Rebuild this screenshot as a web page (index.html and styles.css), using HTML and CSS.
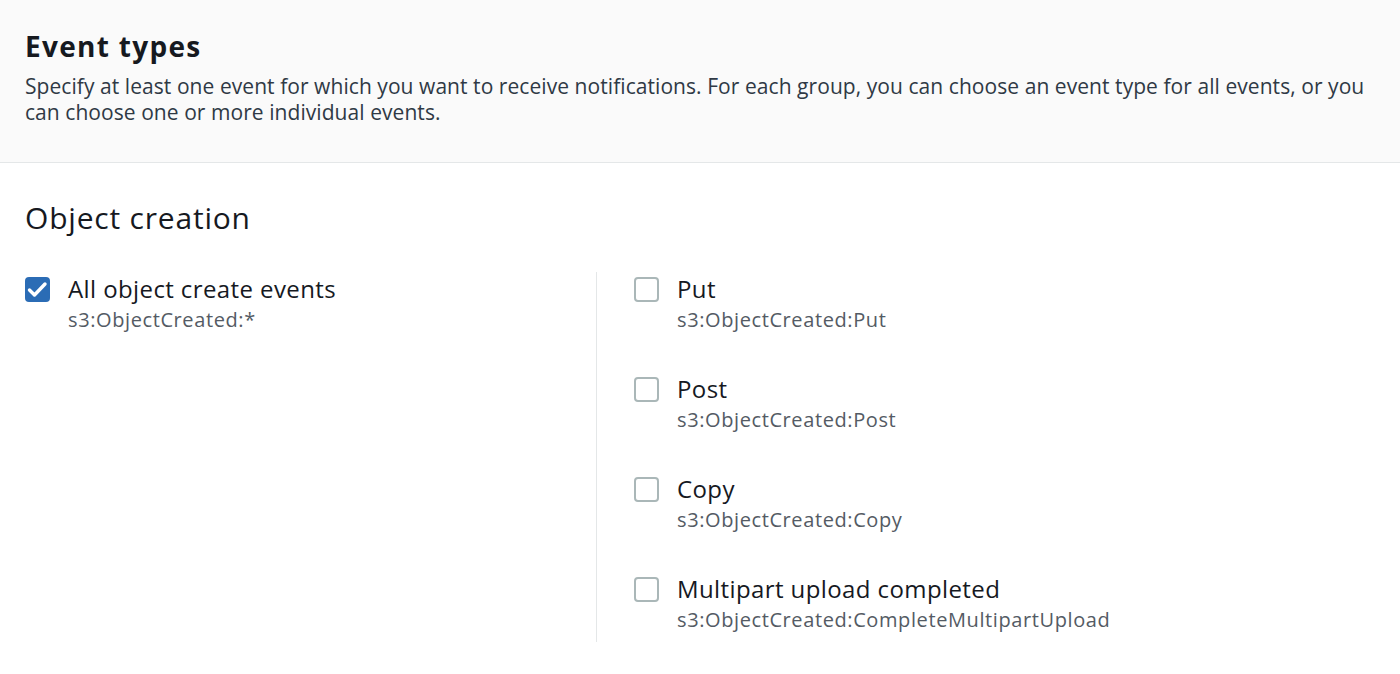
FILE: index.html
```html
<!DOCTYPE html>
<html>
<head>
<meta charset="utf-8">
<link rel="stylesheet" href="styles.css">
</head>
<body>
<div class="panel">
  <header class="head">
    <h2 class="title">Event types</h2>
    <p class="desc">Specify at least one event for which you want to receive notifications. For each group, you can choose an event type for all events, or you can choose one or more individual events.</p>
  </header>
  <section class="body">
    <h3 class="group">Object creation</h3>
    <div class="cols">
      <div class="col left">
        <label class="opt">
          <span class="box checked"><svg viewBox="0 0 25 25" width="25" height="25"><path d="M4.5 13l5 5 10.5-11" fill="none" stroke="#fff" stroke-width="3.4" stroke-linecap="round" stroke-linejoin="round"/></svg></span>
          <span class="txt"><span class="lbl">All object create events</span><span class="sub">s3:ObjectCreated:*</span></span>
        </label>
      </div>
      <div class="col right">
        <label class="opt"><span class="box"></span><span class="txt"><span class="lbl">Put</span><span class="sub">s3:ObjectCreated:Put</span></span></label>
        <label class="opt"><span class="box"></span><span class="txt"><span class="lbl">Post</span><span class="sub">s3:ObjectCreated:Post</span></span></label>
        <label class="opt"><span class="box"></span><span class="txt"><span class="lbl">Copy</span><span class="sub">s3:ObjectCreated:Copy</span></span></label>
        <label class="opt"><span class="box"></span><span class="txt"><span class="lbl">Multipart upload completed</span><span class="sub">s3:ObjectCreated:CompleteMultipartUpload</span></span></label>
      </div>
    </div>
  </section>
</div>
</body>
</html>
```

FILE: styles.css
```css
* { box-sizing: border-box; }
html, body { margin: 0; padding: 0; background: #fff; }
body { font-family: "Open Sans", "Noto Sans", sans-serif; color: #16191f; }
.panel { width: 1400px; }
.head {
  background: #fafafa;
  border-bottom: 1px solid #e4e7e8;
  padding: 26px 25px 0 25px;
  height: 163px;
}
.title {
  margin: 0;
  font-size: 28px;
  font-weight: 700;
  line-height: 40px;
  letter-spacing: 1.3px;
  color: #16191f;
}
.desc {
  margin: 7px 0 0 0;
  font-size: 21px;
  line-height: 26px;
  letter-spacing: 0.06px;
  color: #2f3945;
}
.body { padding: 35px 25px 0 25px; }
.group {
  margin: 0;
  font-size: 30px;
  font-weight: 400;
  line-height: 40px;
  letter-spacing: 0.8px;
}
.cols { display: flex; margin-top: 34px; }
.col.left { width: 572px; border-right: 1px solid #e4e7e8; padding-top: 2px; height: 370px; }
.col.right { padding-left: 37px; padding-top: 2px; display: flex; flex-direction: column; gap: 39px; }
.opt { display: flex; align-items: flex-start; gap: 18px; }
.box {
  width: 25px; height: 25px; flex: none;
  border: 2px solid #aab7b8; border-radius: 4px; background: #fff;
  margin-top: 3px;
}
.box.checked { background: #2b6cb5; border: none; display: block; }
.box.checked svg { display: block; width: 25px; height: 25px; }
.txt { display: flex; flex-direction: column; }
.lbl { font-size: 24px; line-height: 30px; letter-spacing: 0.4px; color: #16191f; }
.sub { font-size: 20px; line-height: 30px; letter-spacing: 0.6px; color: #545b64; margin-top: 1px; }
```
